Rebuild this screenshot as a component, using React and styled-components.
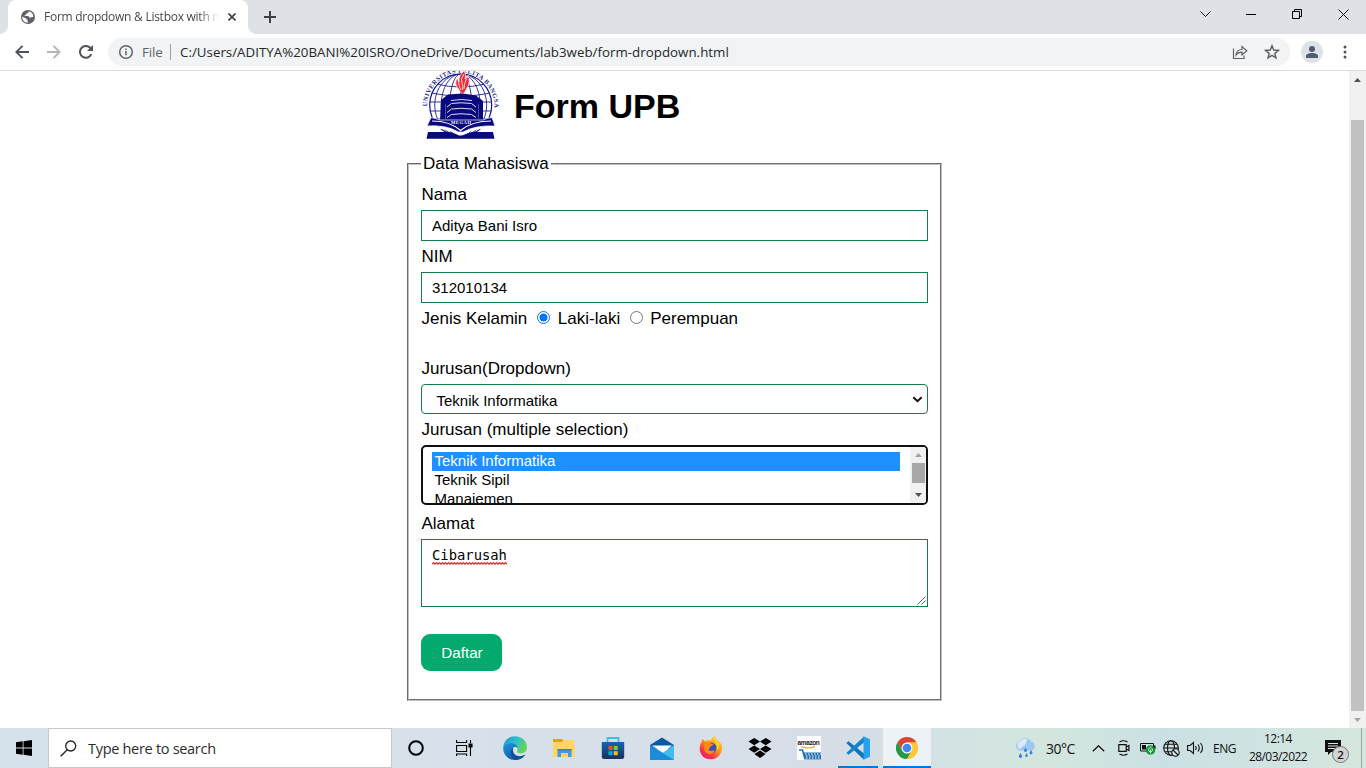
import React from "react";
import styled, { createGlobalStyle } from "styled-components";

const Global = createGlobalStyle`
  * { box-sizing: border-box; }
  body { margin: 0; background: #fff; overflow: hidden; }
  svg { display: block; flex: none; }
`;

const ui = `"Open Sans", "Noto Sans", sans-serif`;
const arial = `"Liberation Sans", Arial, sans-serif`;

const Screen = styled.div`
  width: 1366px;
  height: 768px;
  display: flex;
  flex-direction: column;
  overflow: hidden;
  font-family: ${arial};
`;

/* ---------- browser chrome ---------- */
const TabStrip = styled.div`
  height: 34px;
  flex: none;
  background: #dee1e6;
  display: flex;
  align-items: stretch;
  padding-left: 8px;
`;
const Tab = styled.div`
  width: 240px;
  background: #fff;
  border-radius: 8px 8px 0 0;
  display: flex;
  align-items: center;
  padding-left: 13px;
  position: relative;
  &::before, &::after {
    content: "";
    position: absolute;
    bottom: 0;
    width: 8px;
    height: 8px;
  }
  &::before { left: -8px; background: radial-gradient(circle at 0 0, #dee1e6 7.5px, #fff 8px); }
  &::after { right: -8px; background: radial-gradient(circle at 100% 0, #dee1e6 7.5px, #fff 8px); }
`;
const TabTitle = styled.div`
  margin-left: 9px;
  width: 175px;
  overflow: hidden;
  white-space: nowrap;
  font: 12px/18px ${ui};
  letter-spacing: -0.26px;
  color: #45494d;
  mask-image: linear-gradient(90deg, #000 155px, transparent 175px);
`;
const TabClose = styled.div`margin-left: 9px;`;
const NewTab = styled.div`
  margin-left: 16px;
  display: flex;
  align-items: center;
`;
const WindowButtons = styled.div`
  margin-left: auto;
  display: flex;
`;
const WindowButton = styled.div`
  width: 46px;
  height: 28px;
  display: flex;
  align-items: center;
  justify-content: center;
`;
const Toolbar = styled.div`
  height: 37px;
  flex: none;
  border-bottom: 1px solid #d9dbde;
  display: flex;
  align-items: center;
  padding: 0 0 0 6px;
`;
const NavButton = styled.div`
  width: 32px;
  height: 32px;
  display: flex;
  align-items: center;
  justify-content: center;
`;
const MenuButton = styled.div`
  width: 22px;
  display: flex;
  justify-content: center;
`;
const AddressBar = styled.div`
  margin-left: 6px;
  width: 1182px;
  height: 28px;
  border-radius: 14px;
  background: #f1f3f4;
  display: flex;
  align-items: center;
  gap: 0;
  padding: 0 10px;
  font: 13.3px/20px ${ui};
  color: #24272b;
`;
const Scheme = styled.span`
  margin-left: 8px;
  width: 28px;
  color: #5f6368;
  white-space: nowrap;
  letter-spacing: -0.1px;
`;
const Divider = styled.span`
  width: 1px;
  height: 16px;
  background: #9aa0a6;
`;
const Url = styled.span`
  margin-left: 9px;
  flex: 1;
  white-space: nowrap;
  letter-spacing: 0.025px;
`;
const BarActions = styled.div`
  display: flex;
  gap: 16px;
`;
const Avatar = styled.div`
  width: 22px;
  height: 22px;
  margin: 0 11px;
  border-radius: 50%;
  background: #dee1e6;
  overflow: hidden;
`;

/* ---------- page ---------- */
const Viewport = styled.div`
  height: 657px;
  flex: none;
  display: flex;
  overflow: hidden;
`;
const Page = styled.main`
  flex: 1;
  display: flex;
  flex-direction: column;
  align-items: center;
`;
const Form = styled.form`
  width: 535px;
  margin: 0;
  font-size: 17px;
  color: #000;
`;
const Brand = styled.header`
  height: 69px;
  padding-left: 13px;
  display: flex;
  align-items: center;
`;
const Title = styled.h1`
  margin: 0 0 0 14px;
  font: bold 34px/40px ${arial};
  white-space: nowrap;
`;
const Group = styled.fieldset`
  margin: 14px 0 0;
  height: 547px;
  padding: 6px 12px 0;
  border: 2px groove #c0c0c0;
  min-width: 0;
`;
const Legend = styled.legend`
  padding: 0 2px;
  line-height: 19px;
`;
const Label = styled.label`
  display: block;
  line-height: ${(p) => p.$line || 31}px;
  height: ${(p) => p.$h || 31}px;
  padding-left: 0.5px;
  white-space: nowrap;
`;
const TextInput = styled.input`
  display: block;
  width: 507px;
  height: 31px;
  border: 1px solid #197b47;
  padding: 0 10px;
  font: 15px ${arial};
  color: #000;
  outline: none;
`;
const RadioRow = styled.div`
  height: 50px;
  line-height: 31px;
  display: flex;
  padding-left: 0.5px;
  white-space: nowrap;
`;
const Radio = styled.span`
  width: 13px;
  height: 13px;
  margin: 8px ${(p) => p.$after}px 0 ${(p) => p.$before}px;
  border-radius: 50%;
  border: 1px solid ${(p) => (p.$on ? "#0075ff" : "#767676")};
  background: ${(p) => (p.$on ? "radial-gradient(circle, #0075ff 3.7px, #fff 4.3px)" : "#fff")};
`;
const Dropdown = styled.div`
  width: 507px;
  height: 30px;
  border: 1px solid #197b47;
  border-radius: 4px;
  display: flex;
  align-items: center;
  justify-content: space-between;
  padding: 2px 4px 0 14.5px;
  font-size: 15px;
  svg { margin-top: -2px; }
`;
const ListBox = styled.div`
  width: 507px;
  height: 60px;
  border: 2px solid #101010;
  border-radius: 5px;
  display: flex;
  overflow: hidden;
  font-size: 15px;
`;
const Options = styled.div`
  flex: 1;
  padding: 5px 10px 0 9px;
`;
const Option = styled.div`
  height: 19px;
  line-height: 17px;
  padding-left: 2.5px;
  background: ${(p) => (p.$selected ? "#1e90ff" : "transparent")};
  color: ${(p) => (p.$selected ? "#fff" : "#000")};
`;
const ListScroll = styled.div`
  width: 16px;
  background: #f1f1f1;
  display: flex;
  flex-direction: column;
  align-items: center;
  padding: 6px 0;
`;
const ListThumb = styled.div`
  width: 13px;
  height: 20px;
  margin: 6px 0 10px;
  background: #a8a8a8;
`;
const Address = styled.div`
  position: relative;
  width: 507px;
  height: 68px;
  border: 1px solid #197b47;
  padding: 6px 10px;
  font: 13.84px/18px "DejaVu Sans Mono", monospace;
`;
const Misspelled = styled.span`
  display: block;
  height: 17px;
`;
const Squiggle = styled.svg`
  margin-top: -1px;
`;
const Grip = styled.svg`
  position: absolute;
  right: 1px;
  bottom: 1px;
`;
const Submit = styled.button`
  display: block;
  margin-top: 27px;
  width: 81px;
  height: 37px;
  border: 0;
  border-radius: 9px;
  background: #04aa6d;
  color: #fff;
  font: 15.2px ${arial};
  padding: 0 0 0 1px;
`;
const Scrollbar = styled.div`
  width: 17px;
  background: #f1f1f1;
  display: flex;
  flex-direction: column;
  align-items: center;
`;
const ScrollArrow = styled.div`
  height: ${(p) => p.$h}px;
  display: flex;
  align-items: center;
`;
const Thumb = styled.div`
  width: 13px;
  height: 591px;
  background: #c1c1c1;
`;

/* ---------- taskbar ---------- */
const Taskbar = styled.footer`
  height: 40px;
  flex: none;
  display: flex;
  background: linear-gradient(90deg, #d5e1eb 0, #d7e0e9 48%, #d6dde6 62%, #d2e2e4 69%, #d3e6dd 77%, #cbe0e4 85%, #d0e3e2 92%, #d5e7dc 100%);
  color: #111;
  font-family: ${ui};
`;
const Start = styled.div`
  width: 48px;
  display: flex;
  align-items: center;
  justify-content: center;
`;
const Search = styled.div`
  width: 344px;
  background: #fff;
  border: 1px solid #c5c8cb;
  display: flex;
  align-items: center;
  padding-left: 11px;
  font-size: 14.5px;
  letter-spacing: -0.3px;
  color: #2d2d2d;
  span { margin-left: 11px; }
`;
const Task = styled.div`
  width: ${(p) => p.$w || 49}px;
  display: flex;
  align-items: center;
  justify-content: center;
  background: ${(p) => (p.$active ? "#edf2f6" : "none")};
  box-shadow: ${(p) => (p.$active ? "inset 0 -2px #0078d7" : "none")};
`;
const Running = styled.div`
  width: 40px;
  height: 40px;
  display: flex;
  align-items: center;
  justify-content: center;
  border-bottom: 2px solid #0078d7;
  padding-top: 2px;
`;
const Tray = styled.div`
  margin-left: auto;
  display: flex;
  align-items: center;
  width: 351px;
  font-size: 12px;
  white-space: nowrap;
`;
const TrayItem = styled.div`
  width: ${(p) => p.$w}px;
  flex: none;
  display: flex;
  align-items: center;
  font-size: ${(p) => p.$size || 12}px;
  letter-spacing: ${(p) => p.$ls || 0}px;
`;
const Clock = styled.div`
  width: 66px;
  text-align: center;
  line-height: 18px;
  padding-bottom: 1px;
  font-size: 12px;
  letter-spacing: -0.55px;
`;
const Notice = styled.div`
  position: relative;
  width: 24px;
  height: 40px;
  margin-left: 14px;
  padding-top: 12px;
`;
const Count = styled.div`
  position: absolute;
  left: 7px;
  top: 18px;
  width: 17px;
  height: 17px;
  border-radius: 50%;
  border: 1px solid #777;
  background: #d2d5d5;
  text-align: center;
  font: 600 11.5px/15px ${ui};
`;
const ShowDesktop = styled.div`
  width: 5px;
  height: 40px;
  margin-left: auto;
  border-left: 1px solid #9aa8a6;
`;

const Icon = ({ w = 16, h = w, box, children, ...rest }) => (
  <svg width={w} height={h} viewBox={box || `0 0 ${w} ${h}`} fill="none" {...rest}>
    {children}
  </svg>
);

const Triangle = ({ down, color }) => (
  <Icon w={7} h={4}>
    <path d={down ? "M0 0h7L3.5 4z" : "M0 4h7L3.5 0z"} fill={color} />
  </Icon>
);

const GlobeFavicon = () => (
  <Icon w={14}>
    <circle cx="7" cy="7" r="7" fill="#5f6368" />
    <path d="M7.500 1.200C7.800 2.500 7 3.200 6 3.300c-1 .1-.6 1.200-1.300 1.500-.7.3-1.200.3-1 1.200h3c1.200 0 1.600.8 1.600 1.600h1.200c.9 0 1.300-.9 2.800-.6A5.900 5.900 0 0 0 7.500 1.200zM1.300 6.500c1 .9 2 1.400 3.500 1.400 0 1.300.8 1.500 1.600 1.600v1.700c.4.300.6.500.6 1.500C3.500 12.700.9 10 1.300 6.500z" fill="#fff" />
  </Icon>
);

const Crest = () => (
  <Icon w={80} h={69} aria-label="Universitas Pelita Bangsa">
    <defs>
      <path id="ring" d="M7 35.500A33.700 33.700 0 1 1 74.400 35.500" />
      <clipPath id="dome"><circle cx="40.700" cy="34" r="31.500" /></clipPath>
    </defs>
    <text fontFamily="Liberation Serif, serif" fontWeight="bold" fontSize="6.400" fill="#2a2a8c">
      <textPath href="#ring" textLength="107" lengthAdjust="spacing">UNIVERSITAS PELITA BANGSA</textPath>
    </text>
    <circle cx="40.700" cy="34" r="31" fill="#fff" stroke="#10108a" strokeWidth="1.200" />
    <g stroke="#20208f" strokeWidth=".9" clipPath="url(#dome)">
      <ellipse cx="40.700" cy="34" rx="26" ry="31" />
      <ellipse cx="40.700" cy="34" rx="19.500" ry="31" />
      <ellipse cx="40.700" cy="34" rx="11" ry="31" />
      <path d="M40.700 0v34M16 13q24.500 6 49 0M11 22q30 6 60 0M9 31h63M9 40h63M12 48h57" />
    </g>
    <path d="M44 0q3 3 1 8 3-1 3-4 3 7-1 13-2 5-4.500 6-3-2-4-5-5-5-1-12 0 4 1.500 5Q38 5 44 0z" fill="#ee2a36" stroke="#fff" strokeWidth=".7" />
    <path d="M44 3q-4 5-2 9 1.500 3 .5 7M46.500 8q-2.500 4-2.500 10M38.500 10q0 5 2.500 9" stroke="#fff" strokeWidth=".8" />
    <path d="M21 29l7-5.500 15-1 13 2L63 30v20H20z" fill="#08087f" />
    <g stroke="#dcdcf2" strokeWidth="1" strokeLinejoin="round">
      <path d="M27 36l4.500-3.500q9-1.500 20 0L56 36" />
      <path d="M27 41.500l4.500-3.500q9-1.500 20 0l4.500 3.500" />
      <path d="M27 46.500l4.500-3q9-1.500 20 0l4.500 3" />
      <path d="M31 29.500q11-2 21 0" />
    </g>
    <path d="M25.500 33v15M58.500 33v15" stroke="#6868b0" strokeWidth=".7" />
    <path d="M11 46.500q5 1 9 2.500h43q4-2 9-2.500l3 8.500q-20-1-32 6h-4.500Q26 53.500 7 55z" fill="#08087f" stroke="#fff" strokeWidth=".7" />
    <text x="31" y="52.700" fontFamily="Liberation Serif, serif" fontWeight="bold" fontSize="4.600" fill="#fff" textLength="20">MEGAH</text>
    <path d="M12 50q18 0 28.500 9.500Q52 50 71 50" stroke="#fff" strokeWidth="1.200" />
    <path d="M10 56.500q20-1 30.500 8Q52 55.500 73 56.500" stroke="#fff" strokeWidth="2.200" />
    <path d="M8 61h21q6 1 9 3.500h5q4-2.500 9-3.500h21l1.500 6.800h-68z" fill="#08087f" />
  </Icon>
);

const EdgeIcon = () => (
  <Icon w={24}>
    <defs>
      <linearGradient id="e1" x1="0" y1=".2" x2="1" y2=".6"><stop stopColor="#2494dc" /><stop offset=".5" stopColor="#2dc2c7" /><stop offset="1" stopColor="#68d64b" /></linearGradient>
      <linearGradient id="e2" x1="0" y1="0" x2=".6" y2="1"><stop stopColor="#1f97df" /><stop offset="1" stopColor="#0c59a4" /></linearGradient>
    </defs>
    <path d="M.3 11C1 4.500 6 .2 12 .2c7 0 12 5 12 11 0 4-3 6-6.500 6-3 0-4-1.200-3.200-2.500C15.500 12.500 14 8 9 7.500 5 7.200 1.500 8.500.3 11z" fill="url(#e1)" />
    <path d="M.2 12C.2 9 4 6.700 8.500 7c4 .3 6 3 6.200 5-1-1-2.700-1.500-4-.7-2.700 1.700-2 6 1.300 8.200 3 2 7 1.500 10-1-2 3.500-6 5.500-10 5.500C5 24 .2 18.500.2 12z" fill="url(#e2)" />
    <path d="M10.700 11.300C7 13 6 19.500 11 23.500c5 1 9.500-1.500 11.300-5-3 2.200-7.300 2.200-10 .2-2.500-2-3-5.400-1.600-7.400z" fill="#10509a" />
  </Icon>
);
const FolderIcon = () => (
  <Icon w={22} h={20}>
    <path d="M0 1h9l2 2h10v5H0z" fill="#dda40d" />
    <path d="M0 4h9l2-2h10.500v17H0z" fill="#ffd563" />
    <path d="M4.500 11h14v8h-3.500v-4h-7v4H4.500z" fill="#3f9adf" />
    <path d="M4.500 11h14v1.500h-14z" fill="#2f83c8" />
  </Icon>
);
const StoreIcon = () => (
  <Icon w={24}>
    <defs><linearGradient id="st" x1="0" y1="0" x2="0" y2="1"><stop stopColor="#1266b0" /><stop offset="1" stopColor="#17305e" /></linearGradient></defs>
    <path d="M6.500 7V2h11v5" stroke="#45b8ec" strokeWidth="1.800" />
    <path d="M.8 6h22.400v14.500a2.500 2.500 0 0 1-2.500 2.500H3.300a2.500 2.500 0 0 1-2.500-2.500z" fill="url(#st)" />
    <path d="M7.500 10h4v4h-4z" fill="#f1511b" /><path d="M12.700 10h4v4h-4z" fill="#80cc28" />
    <path d="M7.500 15.200h4v4h-4z" fill="#00adef" /><path d="M12.700 15.200h4v4h-4z" fill="#fbbc09" />
  </Icon>
);
const MailIcon = () => (
  <Icon w={24} h={23}>
    <path d="M0 8L12 .5 24 8v4H0z" fill="#0b58a5" />
    <path d="M2 8.500h20L13 16z" fill="#fff" />
    <path d="M0 8l13 8L24 8v15H0z" fill="#2aa7e6" />
    <path d="M0 8l24 15H0z" fill="#1c8cd8" />
    <path d="M13 16l11-8v15z" fill="#42bdf0" />
  </Icon>
);
const FirefoxIcon = () => (
  <Icon w={24}>
    <defs><linearGradient id="ff" x1=".9" y1="0" x2=".2" y2="1"><stop stopColor="#ffe03b" /><stop offset=".45" stopColor="#ff980e" /><stop offset=".75" stopColor="#ff3647" /><stop offset="1" stopColor="#e31587" /></linearGradient></defs>
    <path d="M4 3l2 2.500C8 4 10 4 12 4.500c1-2.500 2-4 4-4.500 0 3 4 4 5.500 8l.5-2c3 7 0 17-10.500 17.300C5 23.300.7 18.500.7 12.500.7 9 2 7 2.500 6c.2-1 .5-2 1.500-3z" fill="url(#ff)" />
    <circle cx="12" cy="12" r="5.500" fill="#394fbf" />
    <path d="M6 7c3-2 5-.5 5.500.5 1 .2 3 .3 3 1-.3 1-2.500 1-3 2-.2 2-2.200 2-1.700 3.200 1 2.300 4 .3 6.200.8-2 4.500-9 4.500-10.500 0C4.500 11.500 5 9 6 7z" fill="#ff8a16" />
    <path d="M14 3c3 2 5 6 3.500 11 2-1 3-3 2.500-6-1-3-4-4-4-7z" fill="#ffd43a" />
  </Icon>
);
const DropboxIcon = () => (
  <Icon w={24} h={20}>
    <path d="M6.200 0l5.800 3.600-5.800 3.700L.5 3.600zM17.800 0l5.700 3.600-5.700 3.700L12 3.600zM6.200 7.500l5.800 3.600-5.800 3.700L.5 11.100zM17.800 7.500l5.700 3.600-5.700 3.700L12 11.100zM12 12.400l5.600 3.700L12 20l-5.600-3.900z" fill="#000" />
  </Icon>
);
const AmazonWord = styled.span`
  display: block;
  font: bold 6.5px/7px ${arial};
  letter-spacing: -0.4px;
  text-align: center;
  color: #222;
`;
const AmazonTile = styled.div`
  width: 24px;
  height: 24px;
  background: #fff;
  padding-top: 3px;
`;
const AmazonIcon = () => (
  <AmazonTile>
    <AmazonWord>amazon</AmazonWord>
    <Icon w={24} h={14}>
      <path d="M4 .5q7 3 14 0" stroke="#f39b35" strokeWidth="1.200" />
      <path d="M2 4h3.500l2.500 9.300" stroke="#2672ae" strokeWidth="1.600" />
      <path d="M6 6.500h18v7H8.500z" fill="#2672ae" />
      <path d="M8 8h16M9 10h15M9 12h15" stroke="#fff" strokeWidth="1.200" strokeDasharray="1.500 1.500" />
    </Icon>
  </AmazonTile>
);
const CodeIcon = () => (
  <Icon w={24}>
    <path d="M.3 7L2.500 5.200 18 17.500v6.300z" fill="#0f74b9" />
    <path d="M18 6.500L2.500 18.800.3 17 18 .4z" fill="#1084cc" />
    <path d="M17.500.3L24 3.200v17.600l-6.500 3z" fill="#27a2ee" />
  </Icon>
);
const ChromeIcon = () => (
  <Icon w={22}>
    <circle cx="11" cy="11" r="11" fill="#fcc934" />
    <path d="M1.470 5.500A11 11 0 0 1 20.530 5.500H11L6.240 13.750z" fill="#d9453a" />
    <path d="M1.470 5.500A11 11 0 0 0 11 22l4.760-8.250L11 11 6.240 13.750z" fill="#23994a" />
    <path d="M11 5.500h9.530A11 11 0 0 1 11 22l4.760-8.250z" fill="#fcc934" />
    <circle cx="11" cy="11" r="5.500" fill="#fff" />
    <circle cx="11" cy="11" r="4.300" fill="#4285f4" />
  </Icon>
);
const WeatherIcon = () => (
  <Icon w={22} h={21}>
    <path d="M4.500 12.500a4.300 4.300 0 0 1 .3-8.500A6 6 0 0 1 16 3.500a4.700 4.700 0 0 1 .7 9z" fill="#9cc6f3" />
    <path d="M4.500 11a3.800 3.800 0 0 1 .5-7 6 6 0 0 1 8-3C10.500 3 12 7 8 8q-1.500 2.500-3.500 3z" fill="#dcebfb" />
    <g fill="#2f86dc"><path d="M10.500 9.500l1.300 2.300a1.500 1.500 0 1 1-2.600 0zM16 12l1.300 2.300a1.500 1.500 0 1 1-2.600 0zM11.500 15l1.100 2a1.300 1.300 0 1 1-2.200 0zM5.500 15l1.400 2.600a1.600 1.600 0 1 1-2.800 0z" /></g>
  </Icon>
);

export default function App() {
  return (
    <Screen>
      <Global />
      <TabStrip>
        <Tab>
          <GlobeFavicon />
          <TabTitle>Form dropdown &amp; Listbox with multiple</TabTitle>
          <TabClose>
            <Icon w={8} stroke="#3c4043" strokeWidth="1.600"><path d="M.5.5l7 7M7.500.5l-7 7" /></Icon>
          </TabClose>
        </Tab>
        <NewTab>
          <Icon w={12} stroke="#3c4043" strokeWidth="2"><path d="M6 0v12M0 6h12" /></Icon>
        </NewTab>
        <WindowButtons>
          <WindowButton><Icon w={11} h={6} stroke="#111"><path d="M.5.5l5 5 5-5" /></Icon></WindowButton>
          <WindowButton><Icon w={10} h={1}><path d="M0 0h10v1H0z" fill="#000" /></Icon></WindowButton>
          <WindowButton><Icon w={10} stroke="#000"><path d="M.5 2.500h7v7h-7zM2.500 2.500v-2h7v7h-2" /></Icon></WindowButton>
          <WindowButton><Icon w={11} stroke="#111"><path d="M.5.5l10 10M10.500.5l-10 10" /></Icon></WindowButton>
        </WindowButtons>
      </TabStrip>

      <Toolbar>
        <NavButton><Icon w={14} stroke="#50545a" strokeWidth="1.900"><path d="M14 7H1.500M7.500.8L1.300 7l6.200 6.200" /></Icon></NavButton>
        <NavButton><Icon w={14} stroke="#b4b6b9" strokeWidth="1.900"><path d="M0 7h12.500M6.500.8L12.700 7l-6.200 6.200" /></Icon></NavButton>
        <NavButton>
          <Icon w={14}><path d="M12.300 9.200A5.900 5.900 0 1 1 11.200 2.800L12.800 4.500" stroke="#50545a" strokeWidth="2" /><path d="M14 0v6H8z" fill="#50545a" /></Icon>
        </NavButton>
        <AddressBar>
          <Icon w={16} stroke="#5f6368" strokeWidth="1.500"><circle cx="8" cy="8" r="6.300" /><path d="M8 7v4.300M8 4.400v1.500" /></Icon>
          <Scheme>File</Scheme>
          <Divider />
          <Url>C:/Users/ADITYA%20BANI%20ISRO/OneDrive/Documents/lab3web/form-dropdown.html</Url>
          <BarActions>
            <Icon w={16} stroke="#5f6368" strokeWidth="1.200">
              <path d="M1.500 4.500v10h10.500v-3M4 11c.5-4 3-5.500 6-5.500V2.500L14.800 6.700 10 11V8.200C7.500 8.200 5.500 9 4 11z" />
            </Icon>
            <Icon w={16} stroke="#5f6368" strokeWidth="1.500">
              <path d="M8 1.800l1.700 4.300 4.600.3-3.500 3 1.100 4.500L8 11.400l-3.900 2.500 1.100-4.500-3.500-3 4.600-.3z" />
            </Icon>
          </BarActions>
        </AddressBar>
        <Avatar>
          <Icon w={22}><circle cx="11" cy="8" r="3" fill="#505c72" /><path d="M5 17v-2c0-2 3-3 6-3s6 1 6 3v2z" fill="#505c72" /></Icon>
        </Avatar>
        <MenuButton>
          <Icon w={4} h={14}><circle cx="2" cy="2" r="1.500" fill="#50545a" /><circle cx="2" cy="7" r="1.500" fill="#50545a" /><circle cx="2" cy="12" r="1.500" fill="#50545a" /></Icon>
        </MenuButton>
      </Toolbar>

      <Viewport>
        <Page>
          <Form>
            <Brand><Crest /><Title>Form UPB</Title></Brand>
            <Group>
              <Legend>Data Mahasiswa</Legend>
              <Label>Nama</Label>
              <TextInput defaultValue="Aditya Bani Isro" />
              <Label>NIM</Label>
              <TextInput defaultValue="312010134" />
              <RadioRow>
                Jenis Kelamin
                <Radio $on $before={10} $after={7.5} />
                Laki-laki
                <Radio $before={9.5} $after={7.5} />
                Perempuan
              </RadioRow>
              <Label>Jurusan(Dropdown)</Label>
              <Dropdown>
                Teknik Informatika
                <Icon w={11} h={7} stroke="#111" strokeWidth="2"><path d="M1.300 1.200l4.200 4 4.200-4" /></Icon>
              </Dropdown>
              <Label>Jurusan (multiple selection)</Label>
              <ListBox>
                <Options>
                  <Option $selected>Teknik Informatika</Option>
                  <Option>Teknik Sipil</Option>
                  <Option>Manajemen</Option>
                </Options>
                <ListScroll>
                  <Triangle color="#a3a3a3" />
                  <ListThumb />
                  <Triangle down color="#505050" />
                </ListScroll>
              </ListBox>
              <Label $h={34} $line={37}>Alamat</Label>
              <Address>
                <Misspelled>Cibarusah</Misspelled>
                <Squiggle width="75" height="3" viewBox="0 0 75 3">
                  <path d={"M0 2.200" + "l1.500-1.500 1.500 1.500".repeat(25)} fill="none" stroke="#f01818" strokeWidth="1.200" />
                </Squiggle>
                <Grip width="9" height="9" viewBox="0 0 9 9"><path d="M.5 8.500l8-8M4.500 8.500l4-4" stroke="#555" strokeWidth=".9" /></Grip>
              </Address>
              <Submit type="button">Daftar</Submit>
            </Group>
          </Form>
        </Page>
        <Scrollbar>
          <ScrollArrow $h={18}><Triangle color="#505050" /></ScrollArrow>
          <ScrollArrow $h={31} />
          <Thumb />
          <ScrollArrow $h={17}><Triangle down color="#a3a3a3" /></ScrollArrow>
        </Scrollbar>
      </Viewport>

      <Taskbar>
        <Start><Icon w={16}><path d="M0 2.300l6.700-1v6.300H0zM7.500 1.200L16 0v7.600H7.500zM0 8.400h6.700v6.300l-6.700-1zM7.500 8.400H16V16l-8.500-1.200z" fill="#000" /></Icon></Start>
        <Search>
          <Icon w={17} stroke="#222" strokeWidth="1.300"><circle cx="10.700" cy="6" r="5" /><path d="M7.200 9.700L.7 16.200" /></Icon>
          <span>Type here to search</span>
        </Search>
        <Task $w={48}><Icon w={16} stroke="#000" strokeWidth="2"><circle cx="8" cy="8" r="6.800" /></Icon></Task>
        <Task $w={50}>
          <Icon w={19} h={16} stroke="#000" strokeWidth="1.100"><path d="M.6 0v2.500h10V0M.6 5.500h10v6h-10zM.6 16v-2h10v2M14.500 0v3M14.500 7v9" /><path d="M13 4h3v3h-3z" fill="#000" /></Icon>
        </Task>
        <Task><EdgeIcon /></Task>
        <Task><FolderIcon /></Task>
        <Task><StoreIcon /></Task>
        <Task><MailIcon /></Task>
        <Task><FirefoxIcon /></Task>
        <Task><DropboxIcon /></Task>
        <Task><AmazonIcon /></Task>
        <Task $w={50}><Running><CodeIcon /></Running></Task>
        <Task $w={48} $active><ChromeIcon /></Task>
        <Tray>
          <TrayItem $w={31}><WeatherIcon /></TrayItem>
          <TrayItem $w={46} $size={14} $ls={-0.5}>30°C</TrayItem>
          <TrayItem $w={26}><Icon w={13} h={7} stroke="#111" strokeWidth="1.300"><path d="M.8 6.300l5.700-5.500 5.700 5.500" /></Icon></TrayItem>
          <TrayItem $w={22}>
            <Icon w={12} h={16} stroke="#111" strokeWidth="1.200"><path d="M1.500 2q4-2.500 8 0M1.500 14q4 2.500 8 0M.8 4.600h7.400v6.800H.8zM8.200 7l2.700-1.500v5L8.200 9" /></Icon>
          </TrayItem>
          <TrayItem $w={23}>
            <Icon w={16} h={14}><path d="M.5 2.500h13v7.500H.5z" stroke="#111" /><path d="M2 4h4v4.500H2zM14 4.500h1.500V8H14z" fill="#111" /><circle cx="10.500" cy="9" r="4.700" fill="#149133" /><path d="M10.500 6q4 3 0 5.500-4-2.500 0-5.500zM10.500 8.500v4" stroke="#fff" strokeWidth=".8" /></Icon>
          </TrayItem>
          <TrayItem $w={24}>
            <Icon w={17} stroke="#111" strokeWidth="1.100"><circle cx="8" cy="8" r="7.300" /><ellipse cx="8" cy="8" rx="3.500" ry="7.300" /><path d="M.7 8h14.600M2 4.300h12M2 11.700h8" /><circle cx="12.500" cy="12.500" r="3.700" fill="#d0e2e4" /><path d="M10 10l5 5" /></Icon>
          </TrayItem>
          <TrayItem $w={26}>
            <Icon w={17} h={14} stroke="#111" strokeWidth="1.100"><path d="M.6 4.500h2.500L6.500 1.500v11L3.100 9.500H.6zM8.500 5q1.300 2 0 4M11 3.500q2.500 3.500 0 7M13.500 2q4 5 0 10" /></Icon>
          </TrayItem>
          <TrayItem $w={32} $ls={-0.5}>ENG</TrayItem>
          <Clock>12:14<br />28/03/2022</Clock>
          <Notice>
            <Icon w={16} h={16}><path d="M0 0h16v12H6l-3 3v-3H0z" fill="#111" /><path d="M3 3.500h10M3 6h10M3 8.500h7" stroke="#dbe7e2" /></Icon>
            <Count>2</Count>
          </Notice>
          <ShowDesktop />
        </Tray>
      </Taskbar>
    </Screen>
  );
}
